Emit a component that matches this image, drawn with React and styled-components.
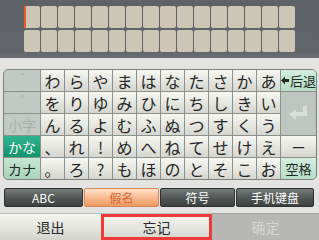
import React from "react";
import styled, { createGlobalStyle } from "styled-components";

const Global = createGlobalStyle`
  html, body { margin: 0; padding: 0; }
  body {
    width: 319px; height: 240px; overflow: hidden;
    background: #e3e3e1;
    font-family: "Noto Sans CJK SC", "Noto Sans", sans-serif;
  }
`;

const Screen = styled.div`
  width: 319px;
  height: 240px;
  display: flex;
  flex-direction: column;
  background: #e3e3e1;
`;

const InputArea = styled.div`
  height: 58px;
  background: linear-gradient(#5e6267, #62666b 90%, #6c7074);
  padding: 6px 0 0 24px;
  box-sizing: border-box;
`;

const TileGrid = styled.div`
  display: grid;
  grid-template-columns: repeat(16, 16px);
  grid-template-rows: repeat(2, 22px);
  column-gap: 1px;
  row-gap: 2px;
`;

const Tile = styled.div`
  background: #cbc7b4;
  border-radius: 2px;
  position: relative;
  ${(p) =>
    p.$cursor &&
    `&::before { content: ""; position: absolute; left: 0; top: 0; bottom: 0; width: 2px; background: #f2582a; }`}
`;

const Middle = styled.div`
  flex: 1;
  display: flex;
  flex-direction: column;
  padding: 11px 2px 0 3px;
`;

const Panel = styled.div`
  display: grid;
  grid-template-columns: 36px repeat(10, 23px) 35px;
  grid-template-rows: repeat(5, 21px);
  gap: 1px;
  background: #8d918e;
  border: 1px solid #7d817e;
  border-radius: 5px;
  overflow: hidden;
  width: max-content;
`;

const variants = {
  key: `background: linear-gradient(#f7f7f3, #e4e4de 60%, #d6d6d0); color: #262626;`,
  side: `background: #c2c8c4; color: #a6aeaa;`,
  green: `background: linear-gradient(#d4eedf, #b6dcc7); color: #1e2a24;`,
  teal: `background: linear-gradient(#2fb48e, #13956f); color: #ffffff;`,
  paleGreen: `background: linear-gradient(#c7e6d4, #a9d2ba); color: #1e2a24;`,
  enter: `background: #bfc5c1;`,
};

const Key = styled.div`
  display: flex;
  align-items: center;
  justify-content: center;
  font-family: "Noto Sans CJK JP", "Noto Sans", sans-serif;
  font-size: ${(p) => p.$size || 16}px;
  line-height: 1;
  ${(p) => variants[p.$variant || "key"]}
  ${(p) => p.$span && `grid-row: span ${p.$span};`}
`;

const Mark = styled.span`
  align-self: flex-start;
  margin: 3px 0 0 auto;
  padding-right: 9px;
  font-size: 10px;
  color: #a9b0ac;
`;

const Tabs = styled.div`
  display: grid;
  grid-template-columns: 79px 75px 75px 78px;
  gap: 1px;
  margin: 8px 0 0 1px;
  height: 16px;
`;

const Tab = styled.div`
  display: flex;
  align-items: center;
  justify-content: center;
  border-radius: 2px;
  font-size: 12px;
  font-family: "Noto Sans CJK SC", "Noto Sans", sans-serif;
  ${(p) =>
    p.$active
      ? `background: linear-gradient(#fde2cc, #f8b88c 55%, #f09a62); color: #d4622e; border: 1px solid #d6875a;`
      : `background: linear-gradient(#767a78, #515553 55%, #3e4240); color: #ffffff; border: 1px solid #2e302f;`}
`;

const Bottom = styled.div`
  height: 27px;
  display: grid;
  grid-template-columns: 101px 111px 107px;
  margin-top: auto;
`;

const BottomButton = styled.div`
  display: flex;
  align-items: center;
  justify-content: center;
  font-size: 14px;
  font-family: "Noto Sans CJK SC", "Noto Sans", sans-serif;
  box-sizing: border-box;
  ${(p) =>
    p.$disabled
      ? `background: #b7b7b5; color: #d6d6d4; border-top: 1px solid #a4a4a2;`
      : `background: linear-gradient(#f5f5f1, #e3e3dd 60%, #d3d3cd); color: #2a2a2a; border-top: 1px solid #bdbdb8;`}
  ${(p) => p.$highlight && `box-shadow: inset 0 0 0 3px #f03a3a;`}
`;

const BackIcon = () => (
  <svg width="8" height="9" viewBox="0 0 8 9" style={{ marginRight: 1 }}>
    <polygon points="0,4.5 4,0.5 4,3 8,3 8,6 4,6 4,8.5" fill="#1e2a24" />
  </svg>
);

const EnterIcon = () => (
  <svg width="22" height="17" viewBox="0 0 22 17">
    <path d="M15 1 H19 V11 H8 V15 L1 9.5 L8 4 V7 H15 Z" fill="#d9dedb" />
  </svg>
);

const rows = [
  ["わ", "ら", "や", "ま", "は", "な", "た", "さ", "か", "あ"],
  ["を", "り", "ゆ", "み", "ひ", "に", "ち", "し", "き", "い"],
  ["ん", "る", "よ", "む", "ふ", "ぬ", "つ", "す", "く", "う"],
  ["、", "れ", "!", "め", "へ", "ね", "て", "せ", "け", "え"],
  ["。", "ろ", "?", "も", "ほ", "の", "と", "そ", "こ", "お"],
];

export default function App() {
  return (
    <Screen>
      <Global />
      <InputArea>
        <TileGrid>
          {Array.from({ length: 32 }).map((_, i) => (
            <Tile key={i} $cursor={i === 0} />
          ))}
        </TileGrid>
      </InputArea>
      <Middle>
        <Panel>
          <Key $variant="side"><Mark>゛</Mark></Key>
          {rows[0].map((c) => <Key key={c}>{c}</Key>)}
          <Key $variant="green" $size={13}><BackIcon />后退</Key>

          <Key $variant="side"><Mark>゜</Mark></Key>
          {rows[1].map((c) => <Key key={c}>{c}</Key>)}
          <Key $variant="enter" $span={2}><EnterIcon /></Key>

          <Key $variant="side" $size={14}>小字</Key>
          {rows[2].map((c) => <Key key={c}>{c}</Key>)}

          <Key $variant="teal" $size={14}>かな</Key>
          {rows[3].map((c) => <Key key={c}>{c}</Key>)}
          <Key $size={14}>ー</Key>

          <Key $variant="paleGreen" $size={14}>カナ</Key>
          {rows[4].map((c) => <Key key={c}>{c}</Key>)}
          <Key $variant="green" $size={13}>空格</Key>
        </Panel>
        <Tabs>
          <Tab>ABC</Tab>
          <Tab $active>假名</Tab>
          <Tab>符号</Tab>
          <Tab>手机键盘</Tab>
        </Tabs>
      </Middle>
      <Bottom>
        <BottomButton>退出</BottomButton>
        <BottomButton $highlight>忘记</BottomButton>
        <BottomButton $disabled>确定</BottomButton>
      </Bottom>
    </Screen>
  );
}
